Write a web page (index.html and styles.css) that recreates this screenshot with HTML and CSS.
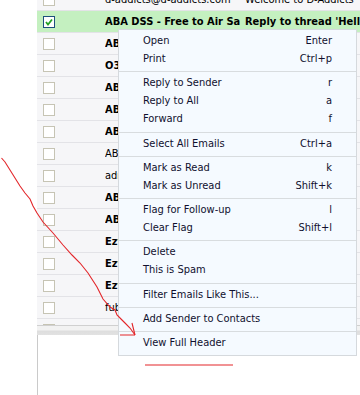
FILE: index.html
```html
<!DOCTYPE html>
<html lang="en">
<head>
    <meta charset="UTF-8">
    <title>Inbox - context menu</title>
    <link rel="stylesheet" href="styles.css">
</head>
<body>
    <!-- Mail list + preview pane -->
    <div class="client">
        <div class="list">
            <div class="rows">
                <div class="row"><span class="check"></span><span class="from">d-addicts@d-addicts.com</span><span class="subject">Welcome to D-Addicts</span></div>
                <div class="row unread selected"><span class="check on"><svg viewBox="0 0 10 10"><path d="M2 5 L4 7.5 L8 2.5" /></svg></span><span class="from">ABA DSS - Free to Air Satellite</span><span class="subject">Reply to thread 'Hello everyone'</span></div>
                <div class="row unread"><span class="check"></span><span class="from">ABA DSS - Free to Air Satellite</span></div>
                <div class="row unread"><span class="check"></span><span class="from">O3b Networks</span></div>
                <div class="row unread"><span class="check"></span><span class="from">ABA DSS - Free to Air Satellite</span></div>
                <div class="row unread"><span class="check"></span><span class="from">ABA DSS - Free to Air Satellite</span></div>
                <div class="row unread"><span class="check"></span><span class="from">ABA DSS - Free to Air Satellite</span></div>
                <div class="row"><span class="check"></span><span class="from">ABA DSS - Free to Air Satellite</span></div>
                <div class="row"><span class="check"></span><span class="from">admin@d-addicts.com</span></div>
                <div class="row unread"><span class="check"></span><span class="from">ABA DSS - Free to Air Satellite</span></div>
                <div class="row unread"><span class="check"></span><span class="from">ABA DSS - Free to Air Satellite</span></div>
                <div class="row unread"><span class="check"></span><span class="from">EzyDVD</span></div>
                <div class="row unread"><span class="check"></span><span class="from">EzyDVD</span></div>
                <div class="row unread"><span class="check"></span><span class="from">EzyDVD</span></div>
                <div class="row"><span class="check"></span><span class="from">fubar@example.com</span></div>
                <div class="row"><span class="check"></span><span class="from">fubar@example.com</span></div>
            </div>
        </div>
        <div class="splitter"></div>
        <div class="preview"></div>
    </div>

    <!-- Right-click menu -->
    <div class="menu">
        <div class="menu-group">
            <div class="menu-item"><span>Open</span><span>Enter</span></div>
            <div class="menu-item"><span>Print</span><span>Ctrl+p</span></div>
        </div>
        <div class="menu-group">
            <div class="menu-item"><span>Reply to Sender</span><span>r</span></div>
            <div class="menu-item"><span>Reply to All</span><span>a</span></div>
            <div class="menu-item"><span>Forward</span><span>f</span></div>
        </div>
        <div class="menu-group">
            <div class="menu-item"><span>Select All Emails</span><span>Ctrl+a</span></div>
        </div>
        <div class="menu-group">
            <div class="menu-item"><span>Mark as Read</span><span>k</span></div>
            <div class="menu-item"><span>Mark as Unread</span><span>Shift+k</span></div>
        </div>
        <div class="menu-group">
            <div class="menu-item"><span>Flag for Follow-up</span><span>l</span></div>
            <div class="menu-item"><span>Clear Flag</span><span>Shift+l</span></div>
        </div>
        <div class="menu-group">
            <div class="menu-item"><span>Delete</span></div>
            <div class="menu-item"><span>This is Spam</span></div>
        </div>
        <div class="menu-group">
            <div class="menu-item"><span>Filter Emails Like This...</span></div>
        </div>
        <div class="menu-group">
            <div class="menu-item"><span>Add Sender to Contacts</span></div>
        </div>
        <div class="menu-group">
            <div class="menu-item"><span>View Full Header</span></div>
        </div>
    </div>

    <!-- hand-drawn red annotation on top of everything -->
    <svg class="scribble" viewBox="0 0 360 395">
        <path d="M1.5 158 L5 162 L10 170 L15 178 L20 186 L25 193 L30 199 L33 206 L37 213 L43 222 L53 233 L63 245 L72 255 L80 263 L88 273 L97 287 L103 299 L110 307 L115 310 L117 315 L121 319 L125 323 L130 328 L135 335" />
        <path d="M120 335 L135 335 M132 323 L135 335" />
        <path d="M145 365 L233 365" />
    </svg>
</body>
</html>
```

FILE: styles.css
```css
body {
    margin: 0;
    background: #fff;
    color: #000;
    font-family: "DejaVu Sans", sans-serif;
    font-stretch: condensed;
    font-size: 11px;
    overflow: hidden;
}

.client {
    margin-left: 37px;
    height: 395px;
    display: flex;
    flex-direction: column;
}
.list {
    height: 325px;
    overflow: hidden;
    background: #f6f6f8;
}
.rows {
    margin-top: -11px;
}
.row {
    display: flex;
    align-items: center;
    height: 21px;
    border-bottom: 1px solid #e3e3e7;
    white-space: nowrap;
}
.row.unread {
    font-weight: bold;
}
.row.selected {
    background: #c4f0c0;
}
.check {
    flex: none;
    width: 10px;
    height: 10px;
    margin-left: 6px;
    border: 1px solid #c6c4b4;
    background: #fff;
}
.check.on {
    border-color: #1d4f7c;
}
.check svg {
    display: block;
    width: 10px;
    height: 10px;
    fill: none;
    stroke: #23a223;
    stroke-width: 1.8;
}
.from {
    flex: none;
    width: 135px;
    margin-left: 50px;
    overflow: hidden;
}
.subject {
    margin-left: 5px;
}

.splitter {
    flex: none;
    height: 9px;
    border-top: 1px solid #d0d0d0;
    background: linear-gradient(#f2f2f2 0, #f2f2f2 40%, #dedede 60%, #e2e2e2 100%);
}
.preview {
    flex: 1;
    border-left: 1px solid #cacaca;
    background: #fff;
}

.menu {
    position: absolute;
    left: 118px;
    top: 29px;
    width: 237px;
    background: #f5faff;
    border: 1px solid #d5d9dd;
    color: #10102e;
    font-weight: normal;
}
.menu-group {
    padding: 2px 0 3.25px;
    border-top: 1px solid #d8dcdf;
}
.menu-group:first-child {
    border-top: none;
}
.menu-item {
    display: flex;
    justify-content: space-between;
    height: 18px;
    line-height: 18px;
    padding: 0 24px;
    white-space: nowrap;
}

.scribble {
    position: absolute;
    left: 0;
    top: 0;
    width: 360px;
    height: 395px;
    fill: none;
    stroke: #e3262a;
    stroke-width: 1.1;
    pointer-events: none;
}
```
